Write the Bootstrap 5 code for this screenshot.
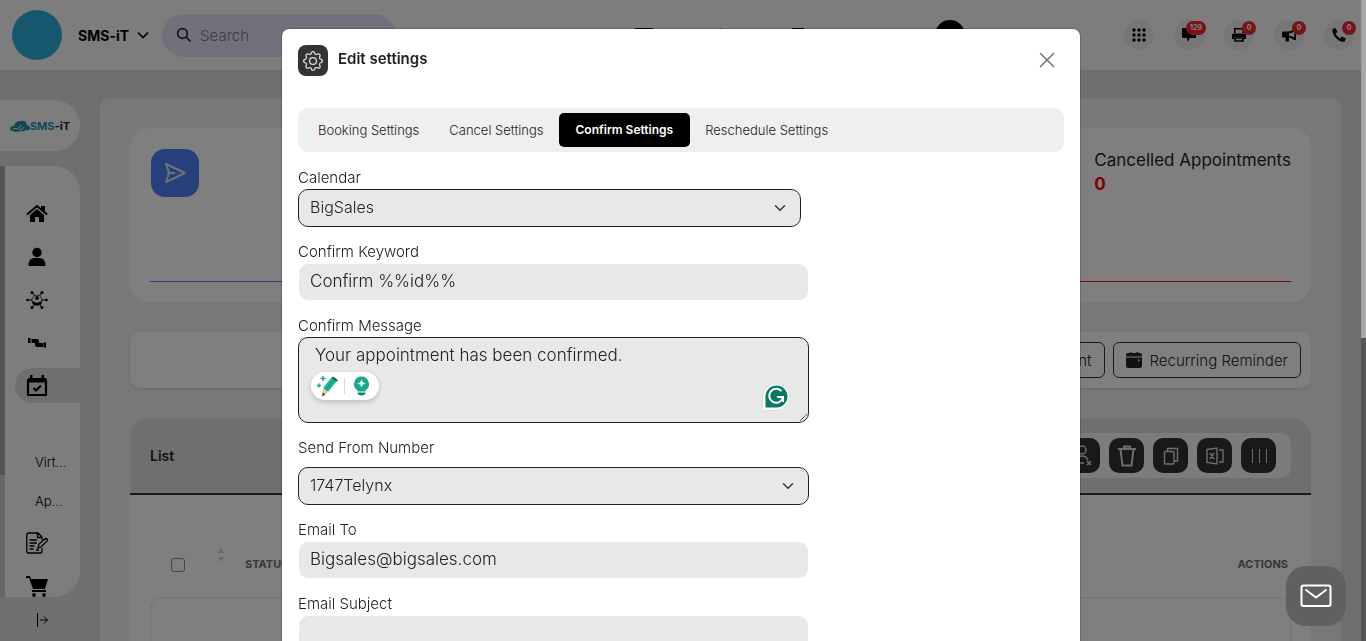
<!DOCTYPE html>
<html lang="en">
<head>
<meta charset="utf-8">
<meta name="viewport" content="width=device-width, initial-scale=1">
<title>SMS-iT – Edit settings</title>
<link href="https://cdn.jsdelivr.net/npm/bootstrap@5.3.0/dist/css/bootstrap.min.css" rel="stylesheet">
<style>
body { font-family: Inter, "Open Sans", sans-serif; font-size: 14px; line-height: 21px; background: #dedede; color: #212529; }
svg { display: block; flex-shrink: 0; }
button { color: inherit; }
.page { height: 100vh; padding-right: 5px; overflow: hidden; }

/* top bar */
.topbar { height: 70px; padding: 0 7px 0 12px; background: #fafafa; }
.brand-dot { width: 50px; height: 50px; background: #2aaeda; }
.brand-name { font-size: 14px; font-weight: 700; color: #000; margin: 0 13px 0 16px; }
.search-pill { width: 234px; height: 43px; background: #e3e3f8; padding: 0 14px; gap: 8px; }
.search-pill input { font-size: 15px; font-weight: 300; background: none; border: 0; width: 100%; outline: 0; padding: 0; }
.search-pill input::placeholder { color: #77777f; opacity: 1; }
.top-actions { gap: 20px; }
.top-round { width: 30px; height: 30px; background: #ededed; border: 0; }
.count-badge { position: absolute; top: 1px; left: 25px; transform: translateX(-50%); min-width: 14px; height: 14px; line-height: 14px; padding: 0 4px; border-radius: 7px; background: #f0282d; color: #fff; font-size: 7px; font-weight: 700; }
.wide-badge { left: 22px; }
.mid-icons { gap: 57px; margin-right: 127px; }
.user-dot { width: 30px; height: 30px; background: #000; margin-right: 159px; }

/* side bar */
.side { width: 80px; padding-top: 30px; color: #000; }
.side-logo { height: 51px; border-radius: 0 26px 26px 0; background: #fafafa; font-size: 11px; font-weight: 700; line-height: 12px; padding-right: 10px; color: #2590ac; }
.side-body { height: 431px; margin-top: 15px; }
.side-track { width: 5px; background: #cfcfcf; }
.side-thumb { height: 309px; background: #a8a8a8; }
.side-menu { border-radius: 0 26px 26px 0; background: #fafafa; padding-top: 26px; overflow: hidden; }
.side-menu a { height: 43px; color: #000; padding-left: 20px; display: flex; align-items: center; text-decoration: none; }
.side-menu a.current { height: 35px; margin: 4px 0 40px 10px; padding-left: 10px; background: #dedede; border-radius: 18px 0 0 18px; }
.side-menu a.sub-link { height: 39px; padding-left: 30px; font-size: 13px; font-weight: 300; }

/* main area */
.main-panel { margin: 28px 20px 0 20px; padding: 30px; border-radius: 10px; background: #f1f1f1; min-width: 0; height: 100vh; }
.stats-box { border-radius: 20px; background: #fff; padding: 20px; height: 174px; }
.stat-blue { border-bottom: 1px solid #4f7fff; }
.stat-red { border-bottom: 1px solid #ff0000; }
.stat-icon { width: 48px; height: 48px; margin: 1px; border-radius: 14px; background: #4f80f8; }
.stat-title { font-size: 17px; line-height: 24px; }
.stat-red .num { color: #ff0000; font-size: 17px; line-height: 24px; font-weight: 700; }
.tool-box { margin-top: 30px; padding: 10px; border-radius: 10px; background: #fff; box-shadow: 0 1px 3px #0002; }
.tool-btn { height: 36px; font-size: 15px; font-weight: 300; border: 1px solid #333; border-radius: 6px; padding: 0 12px; gap: 8px; background: none; display: flex; align-items: center; }
.list-box { margin-top: 30px; border-radius: 20px 20px 0 0; background: #fff; height: 400px; overflow: hidden; }
.list-head { height: 77px; background: #dedede; border-bottom: 2px solid #333; padding: 0 20px; font-weight: 600; }
.list-tools { background: #f8f8f8; border-radius: 10px; padding: 5px 15px; gap: 9px; }
.list-tools button { width: 35px; height: 35px; border: 0; border-radius: 10px; background: #333; color: #ddd; }
.list-body { padding: 36px 20px 0; }
.list-body table { width: 100%; border-collapse: separate; border-spacing: 0; }
.list-body th { height: 66px; font-size: 11px; font-weight: 700; color: #6b707c; }
.list-body td { height: 80px; border: 1px solid #e4e4e4; border-radius: 12px; }
.list-body .form-check-input { width: 14px; height: 14px; margin: 2px 0 0 20px; display: block; border-color: #888; background: none; border-radius: 3px; }
.col-pick { width: 64px; }
.col-sort { width: 30px; }
.cell-end { padding-right: 3px; text-align: right; }

/* dialog */
.modal { width: calc(100% - 4px); color: #333; }
.modal-header { padding: 16px; border: 0; }
.modal-title { font-size: 15px; line-height: 28px; font-weight: 600; margin-left: 10px; color: #222; }
.gear-tile { width: 30px; height: 31px; border-radius: 8px; background: #333; }
.close-btn { border: 0; background: none; padding: 0; margin: 7px 9px 0 0; color: #777; }
.modal-content { border-radius: 8px; }
.tab-strip { background: #efefef; border-radius: 10px; padding: 5px; margin-bottom: 16px; }
.tab-strip .nav-link { font-size: 13px; font-weight: 300; line-height: 18px; padding: 8px 15px; color: #222; border-radius: 5px; }
.tab-strip .nav-link.active { background: #000; color: #fff; font-size: 12px; font-weight: 600; padding: 8px 17px; }
.field { margin-bottom: 15px; }
.field label { display: block; font-size: 15px; font-weight: 300; line-height: 20px; color: #222; margin-bottom: 1px; }
.field label.roomy { margin-bottom: 9px; }
.field .form-control, .field .form-select { font-size: 17px; font-weight: 300; line-height: 24px; height: 38px; padding: 5px 11px 7px; color: #222; background-color: #e8e8e8; border-radius: 10px; border: 1px solid transparent; background-clip: padding-box; }
.field .form-select { font-size: 16px; }
.field .form-select, .field textarea.form-control { border-color: #222; }
.field textarea.form-control { height: 86px; padding: 5px 16px; display: block; }
.assist-pill { position: absolute; left: 13px; bottom: 23px; width: 68px; height: 28px; border-radius: 14px; background: #fff; box-shadow: 0 2px 5px #0003; border: 0; }
.assist-badge { position: absolute; right: 19px; bottom: 12px; }
.scroll-track { position: fixed; z-index: 1060; top: 0; right: 0; width: 5px; height: 100vh; background: #555; }
.scroll-thumb { height: 338px; background: #a8a8a8; border-left: 1px solid #8ba0ac; }
.mail-fab { position: fixed; z-index: 1070; right: 20px; bottom: 15px; width: 60px; height: 60px; border-radius: 20px; border: 0; background: #606060; }
</style>
</head>
<body class="overflow-hidden">
<div class="page">
  <header class="topbar d-flex align-items-center">
    <div class="brand-dot rounded-circle"></div>
    <button class="brand-name d-flex align-items-center gap-2 border-0 bg-transparent p-0">SMS-iT
      <svg width="12" height="12" viewBox="0 0 12 12" fill="none" stroke="#000" stroke-width="1.600"><path d="M1 3.500 6 8.500 11 3.500"/></svg>
    </button>
    <label class="search-pill d-flex align-items-center rounded-pill">
      <svg width="16" height="16" viewBox="0 0 16 16" fill="none" stroke="#222" stroke-width="1.700"><circle cx="6.500" cy="6.500" r="4.800"/><path d="m10 10 4.500 4.500"/></svg>
      <input type="search" placeholder="Search" aria-label="Search">
    </label>
    <div class="mid-icons d-flex align-items-center ms-auto">
      <svg width="20" height="14" viewBox="0 0 20 14"><path d="M1 0h18v14H1z"/></svg>
      <svg width="20" height="14" viewBox="0 0 20 14"><path d="m10 0 8 14H2z"/></svg>
      <svg width="20" height="14" viewBox="0 0 20 14"><path d="M4 0h12v14H4z"/></svg>
    </div>
    <div class="user-dot rounded-circle"></div>
    <div class="top-actions d-flex">
      <button class="top-round rounded-circle p-0 d-flex align-items-center justify-content-center" aria-label="Apps">
        <svg width="14" height="14" viewBox="0 0 14 14"><g id="dots"><circle cx="2" cy="2" r="1.700"/><circle cx="7" cy="2" r="1.700"/><circle cx="12" cy="2" r="1.700"/></g><use href="#dots" y="5"/><use href="#dots" y="10"/></svg>
      </button>
      <button class="top-round rounded-circle p-0 d-flex align-items-center justify-content-center position-relative" aria-label="Messages">
        <svg width="14" height="14" viewBox="0 0 14 14"><path d="M1 0h12q1 0 1 1v8q0 1-1 1H8l-2.500 4L5 10H1q-1 0-1-1V1q0-1 1-1z"/></svg>
        <span class="count-badge wide-badge">129</span>
      </button>
      <button class="top-round rounded-circle p-0 d-flex align-items-center justify-content-center position-relative" aria-label="Fax">
        <svg width="14" height="14" viewBox="0 0 14 14"><path d="M2 0h8l2 2v3h-1.500V2.500L9.500 1.500h-6V5H2zM1.500 5.500h11q1.500 0 1.500 1.500v4h-2V9H2v2H0V7q0-1.500 1.500-1.500z"/><path d="M3 10h8v3H3z" fill="none" stroke="#000" stroke-width="1.600"/></svg>
        <span class="count-badge">0</span>
      </button>
      <button class="top-round rounded-circle p-0 d-flex align-items-center justify-content-center position-relative" aria-label="Campaigns">
        <svg width="14" height="14" viewBox="0 0 14 14"><path d="M1.500 3.500H6Q9 3.500 12 1h2v11h-2Q9 9.500 7 9.500v4H3.500V9.500h-2Q0 9.500 0 8V5q0-1.500 1.500-1.500zM7 5.200v2.600q3 0 5.300 1.800V3.400Q10 5.200 7 5.200z" fill-rule="evenodd"/></svg>
        <span class="count-badge">0</span>
      </button>
      <button class="top-round rounded-circle p-0 d-flex align-items-center justify-content-center position-relative" aria-label="Calls">
        <svg width="14" height="14" viewBox="0 0 14 14"><path d="M.5 1 3.500 0l2 4-2 1.500Q4.800 8.700 8 10.500L9.700 8.500l4.100 2-1 3Q8 14.500 4 10 0 6 .5 1z"/></svg>
        <span class="count-badge">0</span>
      </button>
    </div>
  </header>

  <div class="d-flex">
    <nav class="side flex-shrink-0" aria-label="Main">
      <a href="#" class="side-logo d-flex align-items-center justify-content-end text-decoration-none">
        <svg width="20" height="12" viewBox="0 0 20 12"><path d="M0 9q0-3 4-3 1-5 7-5 5-1 6 4 4 1 3 4-1 2-4 1-2 2-5 1-5 2-8 0Q0 11 0 9z" fill="#2590ac"/><path d="M3 9q5 1 9-4M9 10q4 0 5-3" fill="none" stroke="#eee"/></svg>
        <span>SMS<span class="text-dark">-iT</span></span>
      </a>
      <div class="side-body d-flex">
        <div class="side-track"><div class="side-thumb"></div></div>
        <div class="side-menu flex-grow-1">
          <a href="#" aria-label="Home"><svg width="24" height="20" viewBox="0 0 24 20"><path d="m12 5 7 6v7H14v-5h-4v5H5v-7z"/><path d="m2 10.500 10-8.500 10 8.500" fill="none" stroke="#000" stroke-width="2"/><path d="M16 2h4v6l-4-3z"/></svg></a>
          <a href="#" aria-label="Contacts"><svg width="24" height="20" viewBox="0 0 24 20"><circle cx="12" cy="5.500" r="4.700"/><path d="M3.500 19q0-8 6-8h5q6 0 6 8z"/></svg></a>
          <a href="#" aria-label="Network"><svg width="24" height="20" viewBox="0 0 24 20"><path d="M2 10h20M7 2l10 16M17 2 7 18" stroke="#000"/><circle cx="12" cy="10" r="5" fill="#fafafa" stroke="#000" stroke-width=".7"/><circle cx="12" cy="8" r="1.900"/><path d="M7.500 14v-3l4.500 2 4.500-2v3q-4.500 3-9 0z"/><circle cx="2.500" cy="10" r="1.300"/><circle cx="21.500" cy="10" r="1.300"/><circle cx="7" cy="2.500" r="1.500"/><circle cx="17" cy="2.500" r="1.500"/><circle cx="7" cy="17.500" r="1.500"/><circle cx="17" cy="17.500" r="1.500"/></svg></a>
          <a href="#" aria-label="Pipeline"><svg width="24" height="20" viewBox="0 0 24 20"><path d="M3 5h2.500v5H3zM6.500 6H12q2 0 2 2v2h4v4h-6q-2 0-2-2v-2H6.500zM18.500 9.500H21v5h-2.500z"/></svg></a>
          <a href="#" class="current" aria-label="Calendar"><svg width="24" height="22" viewBox="0 0 24 22"><path d="M3 5h18v15H3z" fill="none" stroke="#000" stroke-width="2.200" stroke-linejoin="round"/><path d="M3 3h18v4.500H3zM5 0h2.500v4H5zM16.500 0H19v4h-2.500z"/><path d="m8.500 13 2.500 2.500 5-5" fill="none" stroke="#000" stroke-width="2"/></svg></a>
          <a href="#" class="sub-link">Virt...</a>
          <a href="#" class="sub-link">Ap...</a>
          <a href="#" aria-label="Notes"><svg width="24" height="24" viewBox="0 0 24 24" fill="none" stroke="#000" stroke-width="1.300"><path d="M17 17v3q0 2-2 2H3.500Q1.800 22 1.800 20V4q0-2 2-2H13l4 4v3M12.500 2v4.500H17M4.500 9H12M4.500 12H12M4.500 15H9.500M4.500 18h4M11 19h3"/><path d="m13 17 1-4 6.500-5.500q2 0 2 2L16 16z"/></svg></a>
          <a href="#" aria-label="Store"><svg width="24" height="22" viewBox="0 0 24 22"><path d="M1 1h4l1 3h17l-3 10H8L4 3H1zM7 15h14v2H7z"/><circle cx="9" cy="20" r="1.900"/><circle cx="19" cy="20" r="1.900"/></svg></a>
        </div>
      </div>
      <button class="border-0 bg-transparent p-0 ms-4 mt-3 d-block" aria-label="Expand"><svg class="ms-2" width="20" height="14" viewBox="0 0 20 14" fill="none" stroke="#000"><path d="M5.500 0v14M8 7h7.500M12 3.500 15.500 7 12 10.500"/></svg></button>
    </nav>

    <main class="main-panel flex-grow-1">
      <section class="stats-box d-flex">
        <div class="stat-blue w-50"><div class="stat-icon d-flex align-items-center justify-content-center">
          <svg width="24" height="24" viewBox="0 0 24 24" fill="none" stroke="#dbe5ee" stroke-width="2" stroke-linejoin="round"><path d="M3 3l19 9-19 9 3-9zM6 12h6"/></svg></div></div>
        <div class="stat-red w-50 d-flex justify-content-end"><div><div class="stat-title">Cancelled Appointments</div><div class="num">0</div></div></div>
      </section>

      <section class="tool-box d-flex justify-content-end gap-2">
        <button class="tool-btn">Appointment</button>
        <button class="tool-btn">
          <svg width="16" height="16" viewBox="0 0 16 16" fill="#222"><path d="M2 1h2V0h1.500v1h5V0H12v1h2q2 0 2 2v1.500H0V3q0-2 2-2zM0 5.500h16V14q0 2-2 2H2q-2 0-2-2zM12 7.500v1.500h1.500V7.500z" fill-rule="evenodd"/></svg>
          Recurring Reminder</button>
      </section>

      <section class="list-box">
        <div class="list-head d-flex align-items-center justify-content-between"><span>List</span>
          <div class="list-tools d-flex">
            <button class="p-0 d-flex align-items-center justify-content-center" aria-label="Unassign"><svg width="24" height="24" viewBox="0 0 24 24" fill="none" stroke="#ddd" stroke-width="1.500"><circle cx="11" cy="6" r="4"/><path d="M3 19q0-7 8-7 4 0 6 4M3 19h10M16 17l4 4M20 17l-4 4"/></svg></button>
            <button class="p-0 d-flex align-items-center justify-content-center" aria-label="Delete"><svg width="20" height="22" viewBox="0 0 20 22" fill="none" stroke="#ddd" stroke-width="2"><path d="M1 4h18M7 3V1.500h6V3M3.500 4.500l2 16h9l2-16"/></svg></button>
            <button class="p-0 d-flex align-items-center justify-content-center" aria-label="Copy"><svg width="18" height="18" viewBox="0 0 18 18" fill="none" stroke="#ddd" stroke-width="1.400"><rect x="2.500" y="4.500" width="9.500" height="12.500" rx="1"/><path d="M5.500 4.500V1.500H15.500V14H12"/></svg></button>
            <button class="p-0 d-flex align-items-center justify-content-center" aria-label="Export to Excel"><svg width="18" height="18" viewBox="0 0 18 18" fill="none" stroke="#ddd" stroke-width="1.400"><path d="M1 2.500 11 1v16L1 15.500zM13 3h4v12h-4M4 6l4 6M8 6l-4 6"/></svg></button>
            <button class="p-0 d-flex align-items-center justify-content-center" aria-label="Columns"><svg width="16" height="16" viewBox="0 0 16 16" stroke="#ddd"><path d="M1.500 1v14M8.500 1v14M15.500 1v14"/></svg></button>
          </div>
        </div>
        <div class="list-body">
          <table>
            <thead><tr>
              <th class="col-pick"><input class="form-check-input" type="checkbox" aria-label="Select all"></th>
              <th class="col-sort"><svg width="12" height="34" viewBox="0 0 12 34" fill="#d4d4d4"><path d="M3 6l3-5 3 5zM3 10h6l-3 5z"/></svg></th>
              <th>STATUS</th>
              <th class="cell-end">ACTIONS</th>
            </tr></thead>
            <tbody><tr><td colspan="4"></td></tr></tbody>
          </table>
        </div>
      </section>
    </main>
  </div>
</div>

<div class="modal-backdrop show"></div>
<div class="modal d-block" tabindex="-1" role="dialog" aria-modal="true" aria-labelledby="dlgTitle">
  <div class="modal-dialog modal-lg">
    <div class="modal-content">
      <div class="modal-header align-items-start">
        <div class="d-flex">
          <div class="gear-tile d-flex align-items-center justify-content-center">
            <svg width="20" height="20" viewBox="0 0 16 16" fill="#ddd"><path d="M8 4.754a3.246 3.246 0 1 0 0 6.492 3.246 3.246 0 0 0 0-6.492zM5.754 8a2.246 2.246 0 1 1 4.492 0 2.246 2.246 0 0 1-4.492 0z"/><path d="M9.796 1.343c-.527-1.790-3.065-1.790-3.592 0l-.094.319a.873.873 0 0 1-1.255.520l-.292-.160c-1.640-.892-3.433.902-2.540 2.541l.159.292a.873.873 0 0 1-.520 1.255l-.319.094c-1.790.527-1.790 3.065 0 3.592l.319.094a.873.873 0 0 1 .520 1.255l-.160.292c-.892 1.640.901 3.434 2.541 2.540l.292-.159a.873.873 0 0 1 1.255.520l.094.319c.527 1.790 3.065 1.790 3.592 0l.094-.319a.873.873 0 0 1 1.255-.520l.292.160c1.640.893 3.434-.902 2.540-2.541l-.159-.292a.873.873 0 0 1 .520-1.255l.319-.094c1.790-.527 1.790-3.065 0-3.592l-.319-.094a.873.873 0 0 1-.520-1.255l.160-.292c.893-1.640-.902-3.433-2.541-2.540l-.292.159a.873.873 0 0 1-1.255-.520l-.094-.319zm-2.633.283c.246-.835 1.428-.835 1.674 0l.094.319a1.873 1.873 0 0 0 2.693 1.115l.291-.160c.764-.415 1.600.420 1.184 1.185l-.159.292a1.873 1.873 0 0 0 1.116 2.692l.318.094c.835.246.835 1.428 0 1.674l-.319.094a1.873 1.873 0 0 0-1.115 2.693l.160.291c.415.764-.420 1.600-1.185 1.184l-.291-.159a1.873 1.873 0 0 0-2.693 1.116l-.094.318c-.246.835-1.428.835-1.674 0l-.094-.319a1.873 1.873 0 0 0-2.692-1.115l-.292.160c-.764.415-1.600-.420-1.184-1.185l.159-.291A1.873 1.873 0 0 0 1.945 8.930l-.319-.094c-.835-.246-.835-1.428 0-1.674l.319-.094A1.873 1.873 0 0 0 3.060 4.377l-.160-.292c-.415-.764.420-1.600 1.185-1.184l.292.159a1.873 1.873 0 0 0 2.692-1.115l.094-.319z"/></svg>
          </div>
          <h1 class="modal-title" id="dlgTitle">Edit settings</h1>
        </div>
        <button class="close-btn" aria-label="Close"><svg width="16" height="16" viewBox="0 0 16 16" stroke="#777" stroke-width="1.600" stroke-linecap="round"><path d="m1.500 1.500 13 13M14.500 1.500l-13 13"/></svg></button>
      </div>
      <div class="modal-body">
        <nav class="tab-strip nav nav-pills" aria-label="Settings">
          <a class="nav-link" href="#">Booking Settings</a>
          <a class="nav-link" href="#">Cancel Settings</a>
          <a class="nav-link active" href="#" aria-current="page">Confirm Settings</a>
          <a class="nav-link" href="#">Reschedule Settings</a>
        </nav>
        <form class="row g-0"><div class="col-8">
          <div class="field pe-2"><label for="cal">Calendar</label><select class="form-select" id="cal"><option>BigSales</option></select></div>
          <div class="field"><label for="kw">Confirm Keyword</label><input class="form-control" id="kw" value="Confirm %%id%%"></div>
          <div class="field position-relative"><label for="msg">Confirm Message</label><textarea class="form-control" id="msg" spellcheck="false">Your appointment has been confirmed.</textarea>
            <button type="button" class="assist-pill d-flex align-items-center justify-content-center p-0" aria-label="Writing ideas">
              <svg width="62" height="24" viewBox="0 0 62 24"><path d="m17 4 5 4-8 10-5-4z" fill="#15b79a"/><path d="m17 4 2-1.500q3 1.500 5 4L22 8z" fill="#0a7560"/><path d="m19.500 6.500-8 10" stroke="#0a8f77"/><path d="m9 14 5 4-5.500 4z" fill="#f2c886"/><path d="M8.800 18.500 8 22.500l3.500-2z" fill="#444"/><path d="M9 2v5M6.500 4.500h5M5 9.500v4M3 11.500h4" stroke="#15a88c" stroke-width="1.400"/><path d="M30.500 4v16" stroke="#ddd"/><path d="M47.500 2.500a7.500 7.500 0 0 0-4 13.800v1.200h8v-1.200a7.500 7.500 0 0 0-4-13.800z" fill="#12ab8f"/><path d="m47.500 5.500 1.200 2.800 2.800 1.200-2.800 1.200-1.200 2.800-1.200-2.800-2.800-1.200 2.800-1.200z" fill="#fff"/><path d="M43.500 18.500h8v1q-1 2-4 2t-4-2z" fill="#0a8870"/></svg>
            </button>
            <svg class="assist-badge" width="28" height="29" viewBox="0 0 28 29"><path d="M.5 28.500V14a13.500 13.500 0 1 1 14 14.500z" fill="#fff" stroke="#ddd"/><path d="M3.500 25.500V14.500a11 11 0 1 1 11 11z" fill="#087a66"/><path d="M19.500 9.200a7 7 0 1 0 1.300 7M15 15h6v5" fill="none" stroke="#fff" stroke-width="2"/></svg>
          </div>
          <div class="field"><label class="roomy" for="num">Send From Number</label><select class="form-select" id="num"><option>1747Telynx</option></select></div>
          <div class="field"><label for="mail">Email To</label><input class="form-control" id="mail" value="Bigsales@bigsales.com"></div>
          <div class="field"><label for="subj">Email Subject</label><input class="form-control" id="subj"></div>
        </div></form>
      </div>
    </div>
  </div>
</div>
<div class="scroll-track"><div class="scroll-thumb"></div></div>
<button class="mail-fab d-flex align-items-center justify-content-center p-0" aria-label="Compose mail"><svg width="32" height="24" viewBox="0 0 32 24" fill="none" stroke="#fff" stroke-width="2" stroke-linejoin="round" stroke-linecap="round"><rect x="1.500" y="1.500" width="29" height="20.500" rx="2"/><path d="m6 6 10 7.500L26 6"/></svg></button>
<script src="https://cdn.jsdelivr.net/npm/bootstrap@5.3.0/dist/js/bootstrap.bundle.min.js"></script>
</body>
</html>
